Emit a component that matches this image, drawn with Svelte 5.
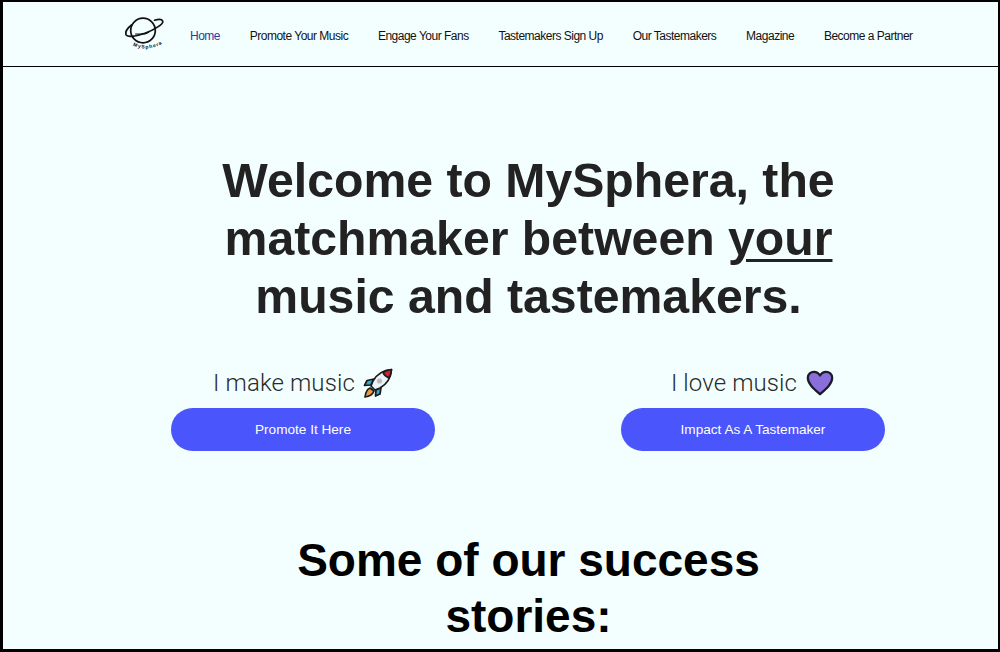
<script lang="ts">
  const links = [
    'Home',
    'Promote Your Music',
    'Engage Your Fans',
    'Tastemakers Sign Up',
    'Our Tastemakers',
    'Magazine',
    'Become a Partner'
  ];
</script>

<div class="page">
  <header class="topbar">
    <svg class="logo" viewBox="0 0 40 40" width="40" height="40" aria-label="MySphera logo">
      <defs>
        <path id="logo-arc" d="M8 31.500C15 36 29 36 39 28.500" />
      </defs>
      <g fill="none" stroke="#111" stroke-linecap="round">
        <circle cx="18" cy="16.500" r="12.300" stroke-width="1.700" />
        <path d="M6.500 11C2 14.500 .2 18 .9 20.500c1 2.800 9 2.500 19-1.200S38.500 10 37.800 7.200C37 5 33.500 5 29.500 6.200" stroke-width="1.700" />
        <path d="M10.500 20l5 .2M18 20c2.500 0 5-.8 6.500-2.600" stroke-width="1.200" />
        <circle cx="17" cy="20" r=".5" stroke-width="1" />
      </g>
      <text class="logo-word"><textPath href="#logo-arc">MySphera</textPath></text>
    </svg>
    <nav class="links">
      {#each links as link, i}
        <a href="#top" class:active={i === 0}>{link}</a>
      {/each}
    </nav>
  </header>

  <main class="content">
    <h1>Welcome to MySphera, the matchmaker between <span class="mine">your</span> music and tastemakers.</h1>

    <section class="choices">
      <div class="choice">
        <p>
          I make music
          <svg class="emoji" viewBox="0 0 30 30" width="30" height="30">
            <g stroke="#1a1a1a" stroke-width="1.700" stroke-linejoin="round">
              <path d="M7 20C4 21 2.500 25 2 29c4-.5 7.500-2 9-6z" fill="#ee9a3c" />
              <path d="M11 11L4 12.500 1.500 17.500 8 17zM18 19.500L17 26l-4.500 2 .5-6z" fill="#35a9c9" />
              <path d="M28.500 1.500C21 2 14 6 10 13l-2 5 4 4 5-2c7-4 11-11 11.500-18.500z" fill="#e9f5f8" />
              <path d="M28.500 1.500C25 1.800 22 3 20 4.500c1 2.500 3.500 4.500 6 5.500 1.500-2.500 2.300-5.500 2.500-8.500z" fill="#d4202e" />
            </g>
            <circle cx="16.500" cy="13" r="2.600" fill="#c6b6c0" />
          </svg>
        </p>
        <a class="cta" href="#top">Promote It Here</a>
      </div>
      <div class="choice">
        <p>
          I love music
          <svg class="emoji" viewBox="0 0 32 32" width="30" height="30">
            <path d="M16 28C9 22 3 17 3 10.500 3 6.500 6.300 4 9.500 4c2.800 0 5 1.400 6.500 4 1.500-2.600 3.700-4 6.500-4C25.700 4 29 6.500 29 10.500 29 17 23 22 16 28z" fill="#8a6fdc" stroke="#1a1a2a" stroke-width="2.400" stroke-linejoin="round" />
          </svg>
        </p>
        <a class="cta" href="#top">Impact As A Tastemaker</a>
      </div>
    </section>

    <h2>Some of our success stories:</h2>
  </main>
</div>

<style>
  :global(body) {
    margin: 0;
    background: #f2fffe;
    font-family: "Liberation Sans", Arial, sans-serif;
    overflow: hidden;
  }

  .page {
    box-sizing: border-box;
    height: 652px;
    overflow: hidden;
    background: #f2fffe;
    border: solid #000;
    border-width: 2px 2px 3px 3px;
  }

  .topbar {
    display: flex;
    align-items: center;
    height: 64px;
    padding-left: 122px;
    border-bottom: 1px solid #000;
  }

  .logo {
    flex: none;
    overflow: visible;
  }

  .logo-word {
    font-size: 5px;
    font-weight: 700;
    letter-spacing: 0.9px;
    fill: #111;
  }

  .links {
    display: flex;
    gap: 29.750px;
    margin: 3px 0 0 25px;
  }

  .links a {
    color: #111;
    font-size: 12px;
    letter-spacing: -0.5px;
    text-decoration: none;
    white-space: nowrap;
  }

  .links a.active {
    color: #2d3a9e;
  }

  .content {
    margin: 0 19px 0 75px;
    text-align: center;
  }

  h1 {
    width: 670px;
    margin: 84px auto 0;
    color: #222;
    font-size: 48.200px;
    font-weight: 700;
    line-height: 58px;
  }

  .mine {
    text-decoration: underline;
    text-decoration-thickness: 3px;
    text-underline-offset: 4px;
  }

  .choices {
    display: grid;
    grid-template-columns: 450px 450px;
    margin-top: 43px;
  }

  .choice {
    display: flex;
    flex-direction: column;
    align-items: center;
  }

  .choice p {
    display: flex;
    align-items: center;
    gap: 8px;
    height: 30px;
    margin: 0;
    color: #2a2a2a;
    font-family: Roboto, "Liberation Sans", sans-serif;
    font-size: 24px;
    font-weight: 300;
    letter-spacing: 0.1px;
  }

  .cta {
    display: flex;
    align-items: center;
    justify-content: center;
    width: 264px;
    height: 43px;
    margin-top: 10px;
    border-radius: 22px;
    background: #4a55fb;
    color: #fff;
    font-size: 13.600px;
    text-decoration: none;
  }

  h2 {
    width: 520px;
    margin: 81px auto 0;
    color: #000;
    font-size: 46px;
    font-weight: 700;
    line-height: 56px;
  }
</style>
